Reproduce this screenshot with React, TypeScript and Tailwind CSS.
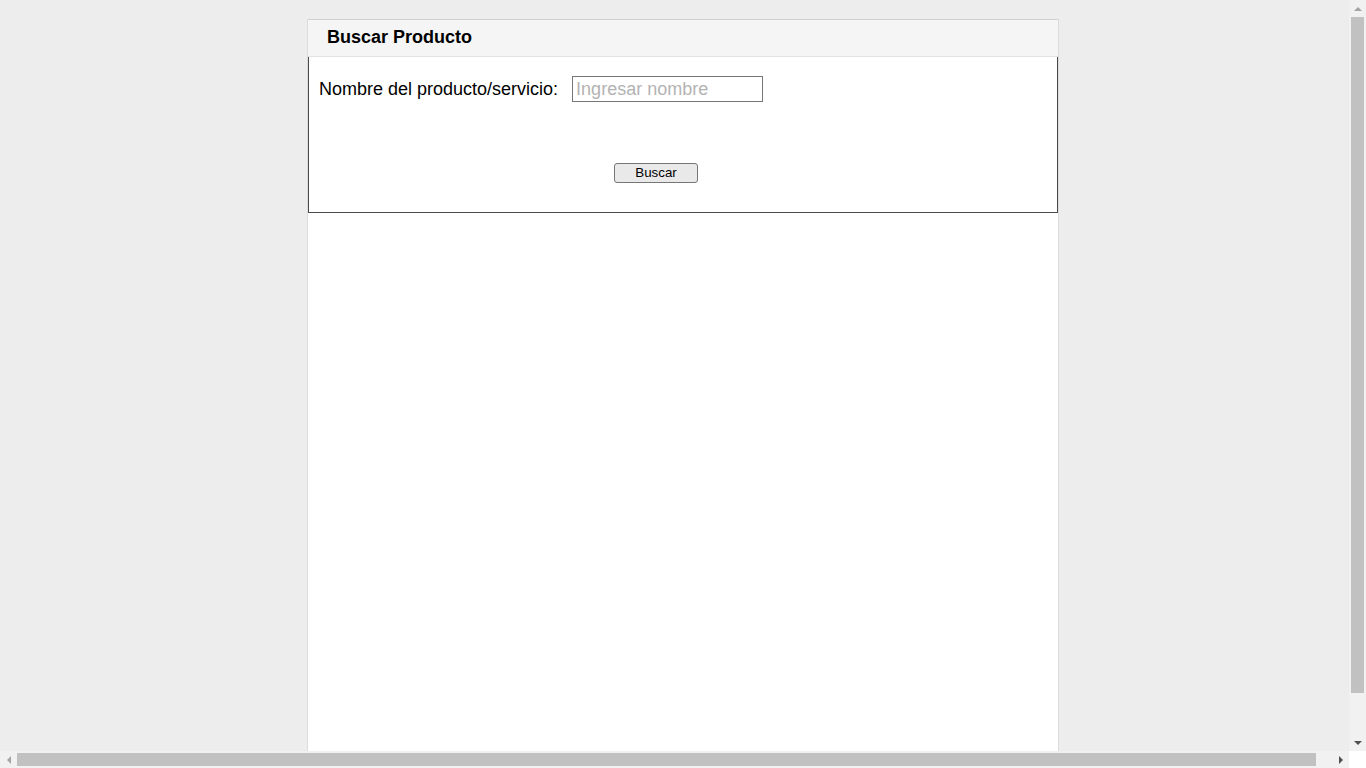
function ScrollArrow({ dir, dim }: { dir: "up" | "down" | "left" | "right"; dim?: boolean }) {
  const pts = {
    up: "0,4 4,0 8,4",
    down: "0,0 8,0 4,4",
    left: "4,0 4,8 0,4",
    right: "0,0 4,4 0,8",
  }[dir];
  const vertical = dir === "up" || dir === "down";
  return (
    <svg width={vertical ? 8 : 4} height={vertical ? 4 : 8} viewBox={vertical ? "0 0 8 4" : "0 0 4 8"}>
      <polygon points={pts} fill={dim ? "#a3a3a3" : "#505050"} />
    </svg>
  );
}

export default function App() {
  return (
    <div className="flex h-[768px] w-[1366px] flex-col overflow-hidden bg-white font-['Liberation_Sans',Arial,sans-serif] text-black">
      <div className="flex h-[751px]">
        <div className="h-full flex-1 overflow-hidden bg-[#ededed] pt-[19px]">
          <div className="ml-[307px] h-[800px] w-[752px] border-x border-[#dcdcdc] bg-white">
            <div className="flex h-[38px] items-center border-y border-t-[#cfcfcf] border-b-[#e3e3e3] bg-[#f5f5f5] pb-[2px] pl-[19px]">
              <h1 className="text-[18px] font-bold">Buscar Producto</h1>
            </div>
            <div className="h-[156px] border border-t-0 border-[#4a4a4a] pt-[19px] pl-[10px]">
              <div className="flex h-[26px] items-center">
                <label className="text-[18px] leading-[26px]">Nombre del producto/servicio:</label>
                <input
                  type="text"
                  placeholder="Ingresar nombre"
                  className="ml-[14px] h-[26px] w-[191px] border border-[#767676] px-[3px] text-[18px] outline-none placeholder:text-[#b3b3b3]"
                />
              </div>
              <button className="ml-[295px] mt-[61px] h-[20px] w-[84px] rounded-[3px] border border-[#767676] bg-[#e9e9e9] text-[13.33px] leading-none">
                Buscar
              </button>
            </div>
          </div>
        </div>
        <div className="flex w-[17px] flex-col bg-[#f1f1f1]">
          <div className="flex h-[17px] items-center justify-center">
            <ScrollArrow dir="up" dim />
          </div>
          <div className="mx-[2px] h-[676px] bg-[#c1c1c1]" />
          <div className="flex-1" />
          <div className="flex h-[17px] items-center justify-center">
            <ScrollArrow dir="down" />
          </div>
        </div>
      </div>
      <div className="flex h-[17px]">
        <div className="flex flex-1 items-center bg-[#f1f1f1]">
          <div className="flex w-[17px] justify-center">
            <ScrollArrow dir="left" dim />
          </div>
          <div className="h-[13px] w-[1299px] bg-[#c1c1c1]" />
          <div className="flex-1" />
          <div className="flex w-[17px] justify-center">
            <ScrollArrow dir="right" />
          </div>
        </div>
        <div className="w-[17px] bg-white" />
      </div>
    </div>
  );
}
